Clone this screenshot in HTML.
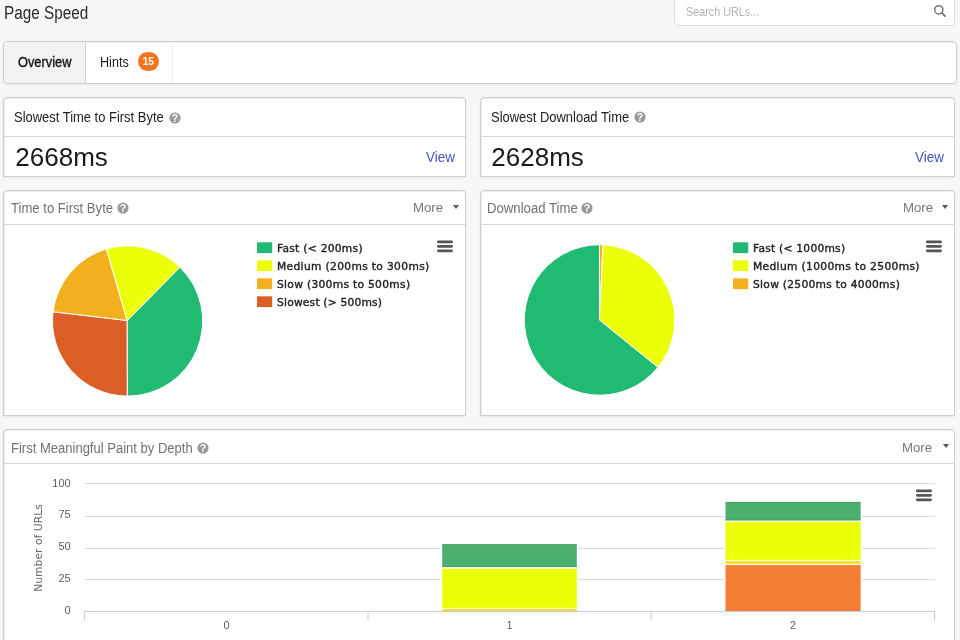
<!DOCTYPE html>
<html lang="en"><head><meta charset="utf-8"><title>Page Speed</title>
<style>
*{box-sizing:border-box;margin:0;padding:0}
html,body{width:960px;height:640px;overflow:hidden;background:#f7f7f7}
body{position:relative;font-family:"Liberation Sans",sans-serif;font-size:14px;color:#222}
#w{position:absolute;left:0;top:0;width:960px;height:640px;overflow:hidden;will-change:transform}
.abs{position:absolute}
.t{position:absolute;white-space:nowrap;transform-origin:0 50%;line-height:20px}
.card{position:absolute;background:#fff;border:1px solid #cecece;border-radius:4px 4px 0 0;box-shadow:0 1px 2px rgba(34,36,38,.08),inset 1px 1px 0 rgba(0,0,0,.07)}
.hr{position:absolute;left:0;right:0;height:1px;background:#d4d4d5}
.lg{font:10.7px/16px "DejaVu Sans","Liberation Sans",sans-serif;color:#222;-webkit-text-stroke:.38px #222;white-space:nowrap}
.ax{position:absolute;font:11px/14px "Liberation Sans",sans-serif;color:#5e5e5e;white-space:nowrap}
.caret{position:absolute;width:0;height:0;border-left:3.5px solid transparent;border-right:3.5px solid transparent;border-top:4px solid #555}
</style></head><body><div id="w">

<div class="t" style="left:4px;top:2px;font-size:18px;line-height:22px;color:#2b2b2b;transform:scaleX(.85)">Page Speed</div>

<div class="card" style="left:674px;top:-6px;width:281px;height:32px;border-color:#dcdcdd;box-shadow:none;border-radius:4px"></div>
<div class="t" style="left:686px;top:1.5px;font-size:13px;color:#b4b4b4;transform:scaleX(.83)">Search URLs...</div>
<svg class="abs" style="left:932px;top:3px" width="16" height="16" viewBox="0 0 16 16"><circle cx="6.8" cy="6.8" r="4.1" fill="none" stroke="#777" stroke-width="1.5"/><path d="M9.9 10L13 13.1" stroke="#777" stroke-width="1.9" stroke-linecap="round"/></svg>

<div class="card" style="left:3px;top:41px;width:954px;height:43px;overflow:hidden;border-radius:4px">
  <div class="abs" style="left:0;top:0;width:81px;height:42px;background:#f2f2f2"></div>
  <div class="abs" style="left:81px;top:0;width:1px;height:42px;background:#d0d0d1"></div>
  <div class="abs" style="left:168px;top:0;width:1px;height:42px;background:#eee"></div>
</div>
<div class="t" style="left:18.3px;top:52.3px;font-size:14px;color:#111;-webkit-text-stroke:.35px #111;transform:scaleX(.915)">Overview</div>
<div class="t" style="left:100px;top:52.4px;font-size:14px;color:#222;transform:scaleX(.9)">Hints</div>
<div class="abs" style="left:137.8px;top:52.4px;width:21px;height:19px;border-radius:9.5px;background:#f2741f;color:#fff;font:bold 10px/19px 'Liberation Sans',sans-serif;text-align:center">15</div>

<div class="card" style="left:3px;top:97px;width:463px;height:80px"><div class="hr" style="top:38px"></div></div>
<div class="card" style="left:480px;top:97px;width:475px;height:80px"><div class="hr" style="top:38px"></div></div>
<div class="t" style="left:14.4px;top:107.2px;font-size:14px;color:#222;transform:scaleX(.925)">Slowest Time to First Byte</div>
<svg class="abs" style="left:169.2px;top:111.6px" width="12" height="12" viewBox="0 0 12 12"><circle cx="6" cy="6" r="5.6" fill="#999"/><text x="6" y="9.6" text-anchor="middle" font-family="Liberation Sans, sans-serif" font-weight="bold" font-size="10.5" fill="#fff">?</text></svg>
<div class="t" style="left:491.1px;top:107.2px;font-size:14px;color:#222;transform:scaleX(.925)">Slowest Download Time</div>
<svg class="abs" style="left:633.6px;top:111.2px" width="12" height="12" viewBox="0 0 12 12"><circle cx="6" cy="6" r="5.6" fill="#999"/><text x="6" y="9.6" text-anchor="middle" font-family="Liberation Sans, sans-serif" font-weight="bold" font-size="10.5" fill="#fff">?</text></svg>
<div class="t" style="left:15.3px;top:141.2px;font-size:26px;line-height:32px;color:#1a1a1a;transform:scaleX(1.0)">2668ms</div>
<div class="t" style="left:491.3px;top:141.2px;font-size:26px;line-height:32px;color:#1a1a1a;transform:scaleX(1.0)">2628ms</div>
<div class="t" style="left:425.5px;top:147px;font-size:14px;color:#4355c0;transform:scaleX(.96)">View</div>
<div class="t" style="left:914.5px;top:147px;font-size:14px;color:#4355c0;transform:scaleX(.96)">View</div>

<div class="card" style="left:3px;top:190px;width:463px;height:226px"><div class="hr" style="top:33px"></div></div>
<div class="card" style="left:480px;top:190px;width:475px;height:226px"><div class="hr" style="top:33px"></div></div>
<div class="t" style="left:11px;top:198px;font-size:14px;color:#727272;transform:scaleX(.935)">Time to First Byte</div>
<svg class="abs" style="left:117.2px;top:202px" width="12" height="12" viewBox="0 0 12 12"><circle cx="6" cy="6" r="5.6" fill="#999"/><text x="6" y="9.6" text-anchor="middle" font-family="Liberation Sans, sans-serif" font-weight="bold" font-size="10.5" fill="#fff">?</text></svg>
<div class="t" style="left:486.7px;top:198px;font-size:14px;color:#727272;transform:scaleX(.94)">Download Time</div>
<svg class="abs" style="left:581.2px;top:202px" width="12" height="12" viewBox="0 0 12 12"><circle cx="6" cy="6" r="5.6" fill="#999"/><text x="6" y="9.6" text-anchor="middle" font-family="Liberation Sans, sans-serif" font-weight="bold" font-size="10.5" fill="#fff">?</text></svg>
<div class="t" style="left:413px;top:198px;font-size:12.6px;color:#777;transform:scaleX(1.05)">More</div>
<div class="caret" style="left:452.8px;top:205px"></div>
<div class="t" style="left:903px;top:198px;font-size:12.6px;color:#777;transform:scaleX(1.05)">More</div>
<div class="caret" style="left:942.4px;top:205px"></div>

<svg class="abs" style="left:0;top:0" width="960" height="640" viewBox="0 0 960 640">
<path d="M127.1 320.5L179.96 267.16A75.1 75.1 0 0 1 127.21 396.10Z" fill="#21ba73" stroke="#fff" stroke-width="1" stroke-linejoin="round"/>
<path d="M127.1 320.5L127.21 396.10A75.1 75.1 0 0 1 53.08 311.72Z" fill="#db5e26" stroke="#fff" stroke-width="1" stroke-linejoin="round"/>
<path d="M127.1 320.5L53.08 311.72A75.1 75.1 0 0 1 106.40 248.96Z" fill="#f2b01e" stroke="#fff" stroke-width="1" stroke-linejoin="round"/>
<path d="M127.1 320.5L106.40 248.96A75.1 75.1 0 0 1 179.96 267.16Z" fill="#eaff08" stroke="#fff" stroke-width="1" stroke-linejoin="round"/>
<path d="M599.55 319.95L658.03 367.31A75.25 75.25 0 1 1 599.55 244.70Z" fill="#21ba73" stroke="#fff" stroke-width="1" stroke-linejoin="round"/>
<path d="M599.55 319.95L599.55 244.70A75.25 75.25 0 0 1 602.96 244.78Z" fill="#f2b01e" stroke="#fff" stroke-width="1" stroke-linejoin="round"/>
<path d="M599.55 319.95L602.96 244.78A75.25 75.25 0 0 1 658.03 367.31Z" fill="#eaff08" stroke="#fff" stroke-width="1" stroke-linejoin="round"/>
<rect x="257" y="242.3" width="15.2" height="10.8" fill="#21ba73"/><rect x="257" y="260.3" width="15.2" height="10.8" fill="#eaff08"/><rect x="257" y="278.3" width="15.2" height="10.8" fill="#f2b01e"/><rect x="257" y="296.3" width="15.2" height="10.8" fill="#db5e26"/>
<rect x="733" y="242.3" width="15.2" height="10.8" fill="#21ba73"/><rect x="733" y="260.3" width="15.2" height="10.8" fill="#eaff08"/><rect x="733" y="278.3" width="15.2" height="10.8" fill="#f2b01e"/>
</svg>
<div class="abs lg" style="left:277px;top:241.30px;letter-spacing:0.28px">Fast (&lt; 200ms)</div><div class="abs lg" style="left:277px;top:259.30px;letter-spacing:0.34px">Medium (200ms to 300ms)</div><div class="abs lg" style="left:277px;top:277.30px;letter-spacing:0.3px">Slow (300ms to 500ms)</div><div class="abs lg" style="left:277px;top:295.30px;letter-spacing:0.2px">Slowest (&gt; 500ms)</div>
<div class="abs lg" style="left:753px;top:241.30px;letter-spacing:0.24px">Fast (&lt; 1000ms)</div><div class="abs lg" style="left:753px;top:259.30px;letter-spacing:0.34px">Medium (1000ms to 2500ms)</div><div class="abs lg" style="left:753px;top:277.30px;letter-spacing:0.28px">Slow (2500ms to 4000ms)</div>
<svg class="abs" style="left:436px;top:239px" width="18" height="15" viewBox="0 0 18 15"><g stroke="#555" stroke-width="2.7" stroke-linecap="round"><path d="M2.3 2.9H15.6M2.3 7.35H15.6M2.3 11.8H15.6"/></g></svg>
<svg class="abs" style="left:925px;top:239px" width="18" height="15" viewBox="0 0 18 15"><g stroke="#555" stroke-width="2.7" stroke-linecap="round"><path d="M2.3 2.9H15.6M2.3 7.35H15.6M2.3 11.8H15.6"/></g></svg>

<div class="card" style="left:3px;top:429px;width:952px;height:231px"><div class="hr" style="top:33px"></div></div>
<div class="t" style="left:11px;top:438px;font-size:14px;color:#727272;transform:scaleX(.93)">First Meaningful Paint by Depth</div>
<svg class="abs" style="left:197.2px;top:441.8px" width="12" height="12" viewBox="0 0 12 12"><circle cx="6" cy="6" r="5.6" fill="#999"/><text x="6" y="9.6" text-anchor="middle" font-family="Liberation Sans, sans-serif" font-weight="bold" font-size="10.5" fill="#fff">?</text></svg>
<div class="t" style="left:902.4px;top:437.5px;font-size:12.6px;color:#777;transform:scaleX(1.05)">More</div>
<div class="caret" style="left:942.7px;top:444.2px"></div>
<svg class="abs" style="left:915px;top:487.6px" width="18" height="15" viewBox="0 0 18 15"><g stroke="#555" stroke-width="2.7" stroke-linecap="round"><path d="M2.3 2.9H15.6M2.3 7.35H15.6M2.3 11.8H15.6"/></g></svg>

<svg class="abs" style="left:0;top:0" width="960" height="640" viewBox="0 0 960 640">
<g stroke="#dbdbdb" stroke-width="1" shape-rendering="crispEdges"><path d="M85 483.5H934.5M85 516.5H934.5M85 548.5H934.5M85 579.5H934.5"/></g>
<rect x="441" y="543.5" width="137" height="68" fill="#fff"/>
<rect x="724" y="501" width="138" height="110.5" fill="#fff"/>
<rect x="442.2" y="544.3" width="134.6" height="22.70" fill="#4caf6e"/>
<path d="M442.2 544.7H576.8M442.2 566.6H576.8" stroke="#3fa163" stroke-width=".8"/>
<rect x="442.2" y="568.7" width="134.6" height="39.20" fill="#eaff08"/>
<rect x="442.2" y="609.0" width="134.6" height="2.00" fill="#ffdc10"/>
<rect x="725.5" y="502" width="135.1" height="18.30" fill="#4caf6e"/>
<path d="M725.5 502.4H860.6M725.5 519.9H860.6" stroke="#3fa163" stroke-width=".8"/>
<rect x="725.5" y="521.8" width="135.1" height="38.10" fill="#eaff08"/>
<rect x="725.5" y="561.2" width="135.1" height="2.60" fill="#ffdc10"/>
<rect x="725.5" y="565.1" width="135.1" height="45.90" fill="#f37d32"/>
<g stroke="#c6cde9" stroke-width="1" fill="none"><path d="M84 611.5H935" shape-rendering="crispEdges"/><path d="M84.5 611.5V620.5M368 611.5V620.5M651.2 611.5V620.5M934.5 611.5V620.5"/></g>
</svg>
<div class="ax" style="left:40px;width:30.7px;text-align:right;top:476.1px">100</div>
<div class="ax" style="left:40px;width:30.7px;text-align:right;top:507.1px">75</div>
<div class="ax" style="left:40px;width:30.7px;text-align:right;top:538.5px">50</div>
<div class="ax" style="left:40px;width:30.7px;text-align:right;top:570.6px">25</div>
<div class="ax" style="left:40px;width:30.7px;text-align:right;top:603.1px">0</div>
<div class="ax" style="left:206.5px;width:40px;text-align:center;top:617.8px">0</div>
<div class="ax" style="left:489.5px;width:40px;text-align:center;top:617.8px">1</div>
<div class="ax" style="left:773px;width:40px;text-align:center;top:617.8px">2</div>
<div class="abs" style="left:39px;top:547.6px;width:0;height:0"><div style="position:absolute;left:-60px;top:-8px;width:120px;height:16px;text-align:center;font:10.8px/16px 'DejaVu Sans','Liberation Sans',sans-serif;color:#6a6a6a;white-space:nowrap;transform:rotate(-90deg)">Number of URLs</div></div>
</div></body></html>
